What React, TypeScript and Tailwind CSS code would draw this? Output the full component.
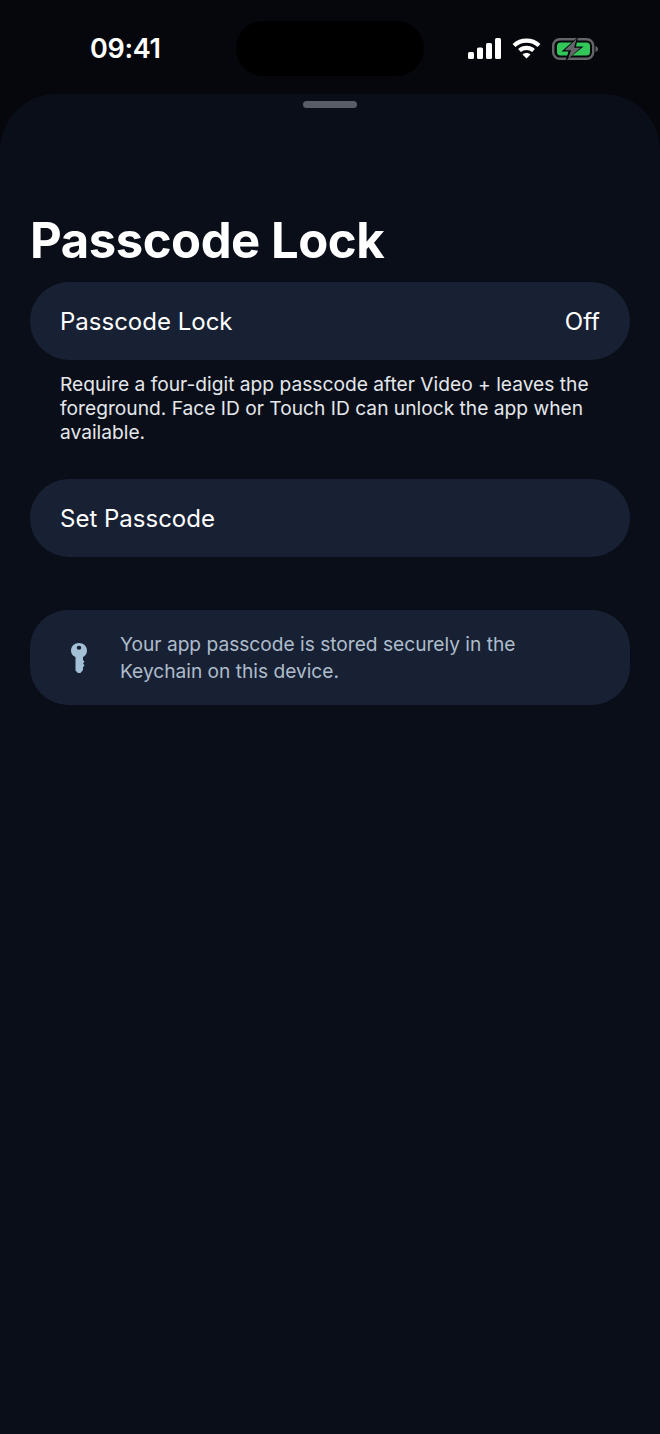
export default function App() {
  return (
    <div className="w-[660px] h-[1434px] bg-[#05070c] flex flex-col overflow-hidden font-['Inter',sans-serif]">
      <div className="h-[94px] shrink-0 flex pt-[21px] pl-[90px]">
        <div className="text-white text-[27px] leading-[56px] font-semibold tracking-[-0.3px] w-[146px]">09:41</div>
        <div className="w-[188px] h-[55px] rounded-full bg-black" />
        <div className="flex items-center gap-[11px] h-[55px] ml-[44px]">
          <svg width="33" height="21" viewBox="0 0 33 21" fill="#fff">
            <rect x="0" y="14" width="6" height="7" rx="1.5" />
            <rect x="9" y="9.5" width="6" height="11.5" rx="1.5" />
            <rect x="18" y="5" width="6" height="16" rx="1.5" />
            <rect x="27" y="0" width="6" height="21" rx="1.5" />
          </svg>
          <svg width="29" height="21" viewBox="0 0 29 21" fill="none" stroke="#fff" strokeWidth="4.2">
            <path d="M2 7.5C9 1 20 1 27 7.5" />
            <path d="M7.5 12.5C11.5 9 17.5 9 21.5 12.5" />
            <path d="M14.5 20.5L10.5 16.5C12.5 14.5 16.5 14.5 18.5 16.5Z" fill="#fff" stroke="none" />
          </svg>
          <svg width="46" height="22" viewBox="0 0 46 22">
            <rect x="1.2" y="1.2" width="40" height="19.6" rx="6.5" fill="none" stroke="#636569" strokeWidth="2.4" />
            <path d="M43.5 8C45 8.5 46 9.5 46 11C46 12.5 45 13.5 43.5 14Z" fill="#636569" />
            <rect x="5" y="4.5" width="33" height="13" rx="3.5" fill="#33c759" />
            <path d="M26 -1L9.5 13.5H16.5L13.5 23L31.5 8.5H24Z" fill="#05070c" />
            <path d="M24.5 1L12.5 12.3H19L16 21L28.5 9.7H22Z" fill="#636569" />
          </svg>
        </div>
      </div>
      <div className="flex-1 bg-[#0a0e18] rounded-t-[56px] px-[30px] pt-[7px] flex flex-col">
        <div className="w-[54px] h-[7px] rounded-full bg-[#575c66] self-center" />
        <h1 className="text-white text-[49px] leading-[60px] font-bold tracking-[-0.45px] mt-[103px]">Passcode Lock</h1>
        <div className="mt-[11px] h-[78px] rounded-[39px] bg-[#182134] flex items-center justify-between pt-[2px] px-[30px] text-white text-[24px]">
          <span>Passcode Lock</span>
          <span>Off</span>
        </div>
        <p className="mt-[12px] px-[30px] text-[#e4e7ec] text-[19.2px] leading-[24px]">
          Require a four-digit app passcode after Video + leaves the foreground. Face ID or Touch ID can unlock the app when available.
        </p>
        <div className="mt-[35px] h-[78px] rounded-[39px] bg-[#182134] flex items-center pt-[2px] px-[30px] text-white text-[24px]">
          Set Passcode
        </div>
        <div className="mt-[53px] h-[95px] rounded-[38px] bg-[#182134] flex items-center pl-[41px] pr-[30px] gap-[33px]">
          <svg width="16" height="30" viewBox="0 0 16 30" className="shrink-0" fill="#a3c0d6">
            <path fillRule="evenodd" d="M8 0C12.4 0 16 3.2 16 7.4C16 10.4 14.4 12.8 12 14V17L13.5 18.7L12 20.4L13.5 22.3L12 24.2V27L9.5 30H7L4.5 27.5V14C1.6 12.8 0 10.4 0 7.4C0 3.2 3.6 0 8 0ZM8 2.8C6.6 2.8 5.8 3.7 5.8 4.8C5.8 5.9 6.6 6.8 8 6.8C9.4 6.8 10.2 5.9 10.2 4.8C10.2 3.7 9.4 2.8 8 2.8Z" />
          </svg>
          <p className="text-[#aebccb] text-[19.15px] leading-[27px]">Your app passcode is stored securely in the Keychain on this device.</p>
        </div>
      </div>
    </div>
  );
}
